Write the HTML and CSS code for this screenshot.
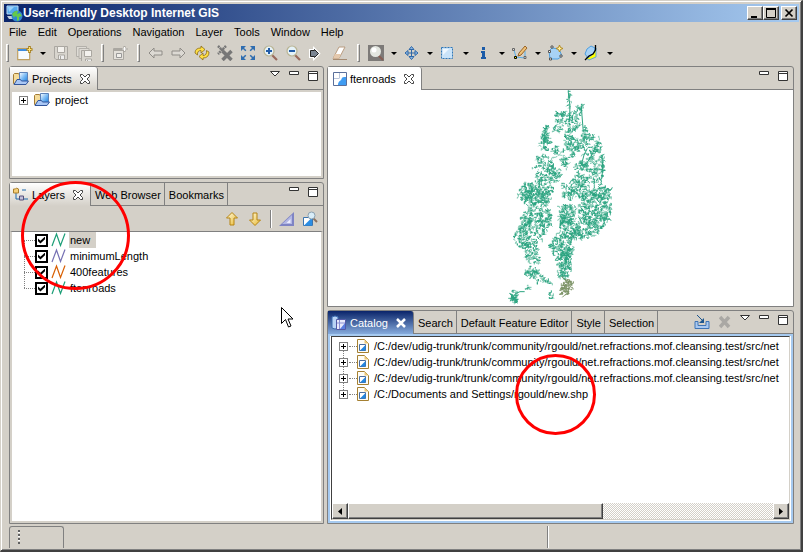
FILE: index.html
```
<!DOCTYPE html>
<html lang="en">
<head>
<meta charset="utf-8">
<title>User-friendly Desktop Internet GIS</title>
<link rel="stylesheet" href="styles.css">
</head>
<body>
<svg class="defs" aria-hidden="true">
  <defs>
    <linearGradient id="gold" x1="0" y1="0" x2="1" y2="1"><stop offset="0" stop-color="#fffbe0"/><stop offset="1" stop-color="#e8b830"/></linearGradient>
    <linearGradient id="blue" x1="0" y1="0" x2="1" y2="1"><stop offset="0" stop-color="#fff"/><stop offset=".5" stop-color="#7fbdf5"/><stop offset="1" stop-color="#1b80e0"/></linearGradient>
    <symbol id="i-folder" viewBox="0 0 16 16">
      <path d="M.5 12.500V3.500l1-1h4l1 1.500h2v8.500z" fill="#f5dc9a" stroke="#a37b35"/>
      <path d="M6.500 1.500h8v9h-8z" fill="url(#blue)" stroke="#5d82b8"/>
      <path d="M1 13.500 4 8.500h3.500l1 1.500H15.500l-2.500 3.500z" fill="#a9c7f5" stroke="#31559b"/>
    </symbol>
    <symbol id="i-map" viewBox="0 0 14 14">
      <path d="M.5.500h13v13H.5z" fill="#fff" stroke="#5a6f9b"/>
      <path d="M5 13C5 9 8 9 8.500 7c.5-2 2-2 4.500-2v8z" fill="#3f9cf2"/>
      <path d="M6.500 1v5M1 6.500h5.500" stroke="#b9c5da"/>
    </symbol>
    <symbol id="i-close" viewBox="0 0 12 12"><path d="M1.500 1.500h2L6 4l2.500-2.500h2v2L8 6l2.500 2.500v2h-2L6 8l-2.500 2.500h-2v-2L4 6 1.500 3.500z" fill="#fff" stroke="#444"/></symbol>
    <symbol id="i-menu" viewBox="0 0 10 6"><path d="M.5.500h9L5 5z" fill="#fff" stroke="#333"/></symbol>
    <symbol id="i-min" viewBox="0 0 10 4"><path d="M.5.500h9v3h-9z" fill="#fff" stroke="#333"/></symbol>
    <symbol id="i-max" viewBox="0 0 10 10"><path d="M.5.500h9v9h-9zM0 2.500h10" fill="#fff" stroke="#333"/></symbol>
    <symbol id="i-lines" viewBox="0 0 15 16"><path d="M1 14 5.500 2l4 11.500 4.500-12" fill="none" stroke="currentColor" stroke-width="1.200"/></symbol>
    <symbol id="i-doc" viewBox="0 0 12 14">
      <path d="M.5.500h7l4 4v9H.5z" fill="#fffdf5" stroke="#a58032"/>
      <path d="M7.500.500v4h4z" fill="#ecc878"/>
      <path d="M2.500 5.500h6v6h-6z" fill="#fff" stroke="#4b6d9e"/><path d="M3 11.500 8.500 6v5.500z" fill="#2386df"/>
    </symbol>
    <symbol id="i-lens" viewBox="0 0 16 16"><path d="m9 10 5 5" stroke="#9a6a5c" stroke-width="2.200"/><circle cx="6" cy="6" r="5" fill="#e5f2f8" stroke="#b9b493" stroke-width="1.200"/></symbol>
    <symbol id="i-disk" viewBox="0 0 16 16"><path d="M1.500 1.500h13v13H3l-1.500-1.500z" fill="#d8d5ce" stroke="#aaa7a1"/><path d="M4.500 1.500h7v6h-7z" fill="#f4f2ee" stroke="#aaa7a1"/><path d="M5.500 14v-4h6v4M7.500 11v3" fill="#eee" stroke="#aaa7a1"/></symbol>
  </defs>
</svg>

<div class="window">
  <header class="titlebar">
    <svg class="appicon" viewBox="0 0 17 17">
      <path d="M1 1h11v8H1z" fill="#55a9ec" stroke="#b9dcf8"/><path d="M2 2h6L3 7z" fill="#9ad2fb"/><path d="M1 11h8l1 3H3z" fill="#c5d0dc"/>
      <circle cx="11" cy="11" r="5.500" fill="#3185cf"/><path d="M6 9q3-4 6-3l-1 3 3-1 2 3-3 1v3l-2 1v-4l-2-1-1 2z" fill="#65c94b"/>
    </svg>
    <h1>User-friendly Desktop Internet GIS</h1>
    <div class="winbuttons">
      <button aria-label="Minimize window"><svg viewBox="0 0 10 10"><path d="M1 8h6v2H1z"/></svg></button>
      <button aria-label="Maximize window"><svg viewBox="0 0 10 10"><path d="M.5 1h9v8.500h-9z" fill="none" stroke="#000"/><path d="M0 0h10v2H0z"/></svg></button>
      <button class="closewin" aria-label="Close window"><svg viewBox="0 0 10 10"><path d="m1.500 1.500 7 7m0-7-7 7" stroke="#000" stroke-width="1.700"/></svg></button>
    </div>
  </header>

  <nav class="menubar">
    <button>File</button><button>Edit</button><button>Operations</button><button>Navigation</button><button>Layer</button><button>Tools</button><button>Window</button><button>Help</button>
  </nav>

  <div class="toolbar">
    <i class="grip"></i>
    <button class="tool" aria-label="New"><svg viewBox="0 0 16 16"><path d="M.7 3.700h12v11H.7z" fill="#f7fbff" stroke="#c0a060" stroke-width="1.200"/><path d="M1 4h9v2H1z" fill="#3c8ce0"/><path d="M12.500 1v7M9.500 4.500h6" stroke="#a57c12" stroke-width="2.500"/><path d="M12.500 2v5M10.500 4.500h4" stroke="#ffe37a"/></svg></button>
    <button class="drop" aria-label="New options"></button>
    <button class="tool" aria-label="Save"><svg><use href="#i-disk"/></svg></button>
    <button class="tool" aria-label="Save all"><svg viewBox="0 0 16 16"><path d="M.5 1.500h10v10H.5z" fill="#dedbd5" stroke="#b3b0aa"/><path d="M3 3.500h10v10H3z" fill="#dedbd5" stroke="#b3b0aa"/><svg x="4" y="4" width="12" height="12"><use href="#i-disk"/></svg></svg></button>
    <i class="grip"></i>
    <button class="tool" aria-label="New map"><svg viewBox="0 0 16 16"><path d="M1.500 3.500h10v11h-10z" fill="#e4e1db" stroke="#aaa7a1"/><path d="M2 4h9v2H2z" fill="#aaa7a1"/><path d="M4.500 8.500h5v4h-5z" fill="#f1efeb" stroke="#999"/><path d="M12.500 1v6M9.500 4h6" stroke="#a9a6a0" stroke-width="2"/><path d="M12.500 2v4M10.500 4h4" stroke="#fff"/></svg></button>
    <i class="grip"></i>
    <button class="tool" aria-label="Back"><svg viewBox="0 0 16 16"><path d="m1 8 5-5v3h8v4H6v3z" fill="#dcd9d3" stroke="#8f8c87"/></svg></button>
    <button class="tool" aria-label="Forward"><svg viewBox="0 0 16 16"><path d="m14 8-5-5v3H1v4h8v3z" fill="#dcd9d3" stroke="#8f8c87"/></svg></button>
    <button class="tool" aria-label="Refresh"><svg viewBox="0 0 16 16"><path d="M1 8q0-5 6-5V1l4 3.500L7 8V5.500Q3 5.500 3.500 10z" fill="#ffdf43" stroke="#8a6c18" stroke-width=".8"/><path d="M15 7q0 6-6 6v2l-4-3.500L9 8v2.500q4 0 3.500-5z" fill="#ffdf43" stroke="#8a6c18" stroke-width=".8"/></svg></button>
    <button class="tool" aria-label="Stop all"><svg viewBox="0 0 16 16"><path d="m1 1 8 8m0-8-8 8" stroke="#777" stroke-width="2.500" stroke-dasharray="2 .5"/><path d="m5.500 6 9 9m0-9-9 9" stroke="#777" stroke-width="3.500"/></svg></button>
    <button class="tool" aria-label="Zoom to extent"><svg viewBox="0 0 16 16"><path d="M1 1h5L1 6zM15 1v5l-5-5zM1 15v-5l5 5zM15 15h-5l5-5z" fill="#2f6db0"/><path d="m3 3 10 10m0-10L3 13" stroke="#2f6db0" stroke-width="1.500" stroke-dasharray="4 6.200 4"/></svg></button>
    <button class="tool" aria-label="Zoom in"><svg viewBox="0 0 16 16"><use href="#i-lens"/><path d="M6 3v6M3 6h6" stroke="#225ca8" stroke-width="2"/></svg></button>
    <button class="tool" aria-label="Zoom out"><svg viewBox="0 0 16 16"><use href="#i-lens"/><path d="M3 6h6" stroke="#225ca8" stroke-width="2"/></svg></button>
    <button class="tool" aria-label="Go"><svg viewBox="0 0 16 16"><path d="M1.500 5.500h4v-1l4 4-4 4v-1h-4z" fill="#7a8592" stroke="#fff" stroke-width="3"/><path d="M1.500 5.500h4v-1l4 4-4 4v-1h-4z" fill="#7a8592" stroke="#222"/></svg></button>
    <button class="tool" aria-label="Clear selection"><svg viewBox="0 0 16 16"><path d="M1 14.500h14" stroke="#a58b72"/><path d="M7 2h6L7 13.500H1z" fill="#fff" stroke="#b99c80"/><path d="m3 9-2 4.500h6L9 9z" fill="#e5c9ad"/></svg></button>
    <i class="grip"></i>
    <button class="tool" aria-label="Zoom tool"><svg viewBox="0 0 16 16"><path d="M0 0h16v16H0z" fill="#7d7a78"/><path d="m10 10 5 5" stroke="#865d53" stroke-width="2"/><circle cx="7.500" cy="6.500" r="5.500" fill="#e3e6e0"/><circle cx="6" cy="5" r="2.500" fill="#fff"/></svg></button>
    <button class="drop" aria-label="Zoom tools"></button>
    <button class="tool" aria-label="Pan tool"><svg viewBox="0 0 16 16"><path d="M7.500 2v12M1.500 8h12" stroke="#2f68a8"/><path d="m7.500 1.500 2.500 3H5zM7.500 14.500l2.500-3H5zM1 8l3-2.500v5zM14 8l-3-2.500v5z" fill="#8eb9e5" stroke="#2f68a8"/></svg></button>
    <button class="drop" aria-label="Pan tools"></button>
    <button class="tool" aria-label="Select tool"><svg viewBox="0 0 16 16"><path d="M1.500 2.500h11v11h-11z" fill="#c9e3f9" stroke="#2f77b8" stroke-dasharray="2 1"/><path d="M3 4h6l-6 6z" fill="#eef7ff"/></svg></button>
    <button class="drop" aria-label="Select tools"></button>
    <button class="tool" aria-label="Info tool"><svg viewBox="0 0 16 16"><path d="M6 2h3v3H6zM5 6h4v6h1v2H5v-2h1V8H5z" fill="#1b5ba8"/></svg></button>
    <button class="drop" aria-label="Info tools"></button>
    <button class="tool" aria-label="Edit geometry"><svg viewBox="0 0 16 16"><path d="m2 5 2 7 9 1V6" fill="none" stroke="#58aee8"/><path d="m6 11 1-3 6-7 2 2-6 7z" fill="#eec178" stroke="#9a6427"/><path d="M.5 3.500h2v2h-2zM12 11.500h2v2h-2z" fill="#ddd" stroke="#666"/><path d="M2.500 11.500h2v2h-2z" fill="#ff0" stroke="#000"/></svg></button>
    <button class="drop" aria-label="Edit tools"></button>
    <button class="tool" aria-label="Create feature"><svg viewBox="0 0 16 16"><path d="m4 3 7 1 3 7-4 3H2L1 6z" fill="#a8d2f5" stroke="#4d9fe0"/><path d="M3 1h2v2H3zM.5 5.500h2v2h-2zM12 10h2v2h-2zM1.500 13h2v2h-2z" fill="#fff" stroke="#555"/><path d="m11.500 0 1 2.500L15 3.500l-2.500 1-1 2.500-1-2.500-2.500-1 2.500-1z" fill="#fff0a0" stroke="#b38a20"/></svg></button>
    <button class="drop" aria-label="Create tools"></button>
    <button class="tool" aria-label="Split feature"><svg viewBox="0 0 16 16"><path d="M12 3v9l-7 3-3-2 5-3 4-5z" fill="#ff0" stroke="#67a8cf"/><path d="m3 4 4-3 4 2-1 5-6 5-3-4z" fill="#a8d2f5" stroke="#4d9fe0"/><path d="M11.500 0v5L9 9l-4 2-4 4" fill="none" stroke="#000" stroke-width="1.300"/></svg></button>
    <button class="drop" aria-label="Split tools"></button>
  </div>

  <main class="workbench">
    <div class="column left">
      <section class="view">
        <div class="tabs">
          <button class="tab current"><svg class="i16"><use href="#i-folder"/></svg>Projects<svg class="x"><use href="#i-close"/></svg></button>
          <div class="viewtools"><svg class="vmenu"><use href="#i-menu"/></svg><svg class="vmin"><use href="#i-min"/></svg><svg class="vmax"><use href="#i-max"/></svg></div>
        </div>
        <div class="content inset">
          <ul class="tree projects"><li><button class="expander" aria-label="Expand project"></button><svg class="i16"><use href="#i-folder"/></svg><span>project</span></li></ul>
        </div>
      </section>

      <section class="view layers">
        <div class="tabs">
          <button class="tab current"><svg class="i16" viewBox="0 0 16 16"><path d="M3 6v6h4M9 3h4M11 12h4" fill="none" stroke="#1b68ad"/><path d="M.5 2h2l1-1 2 1v4h-5z" fill="#f5cf78" stroke="#aa7f2c"/><path d="M6.500 9h4v4h-4z" fill="#c3bfd8" stroke="#55507c"/></svg>Layers<svg class="x"><use href="#i-close"/></svg></button>
          <button class="tab">Web Browser</button><button class="tab">Bookmarks</button>
          <div class="viewtools"><svg class="vmin"><use href="#i-min"/></svg><svg class="vmax"><use href="#i-max"/></svg></div>
        </div>
        <div class="viewbar">
          <button aria-label="Move up"><svg viewBox="0 0 16 16"><path d="m8 1.500 5.500 5.500H10v7H6V7H2.500z" fill="url(#gold)" stroke="#b68412"/></svg></button>
          <button aria-label="Move down"><svg viewBox="0 0 16 16"><path d="m8 14.500 5.500-5.500H10V2H6v7H2.500z" fill="url(#gold)" stroke="#b68412"/></svg></button>
          <i class="divider"></i>
          <button aria-label="Simplify"><svg viewBox="0 0 16 16"><path d="M15 1v14H0z" fill="#7f84c4"/><path d="M13 4v9H3z" fill="#b3b8e4"/><path d="M11.500 8v4h-4z" fill="#eef"/></svg></button>
          <button aria-label="Zoom to layer"><svg viewBox="0 0 16 16"><path d="M1.500 6.500h9v8h-9z" fill="#fff" stroke="#3a74af"/><path d="m2 14.500 8-8v8z" fill="#2c8ee4"/><path d="m11 7 4 4" stroke="#8c7260" stroke-width="2"/><circle cx="9.500" cy="4.500" r="3.500" fill="#d9edf8" stroke="#8ba0b0"/></svg></button>
        </div>
        <div class="content inset">
          <ul class="tree layerlist">
            <li class="selected"><i class="branch"></i><input type="checkbox" id="l1" checked><svg class="line teal"><use href="#i-lines"/></svg><label for="l1">new</label></li>
            <li><i class="branch"></i><input type="checkbox" id="l2" checked><svg class="line violet"><use href="#i-lines"/></svg><label for="l2">minimumLength</label></li>
            <li><i class="branch"></i><input type="checkbox" id="l3" checked><svg class="line orange"><use href="#i-lines"/></svg><label for="l3">400features</label></li>
            <li><i class="branch"></i><input type="checkbox" id="l4" checked><svg class="line teal"><use href="#i-lines"/></svg><label for="l4">ftenroads</label></li>
          </ul>
        </div>
        <svg class="ring ring-layers" viewBox="0 0 109 109"><circle cx="54.500" cy="54.500" r="53"/></svg>
        <svg class="cursor" viewBox="0 0 12 21"><path d="M.5.500v16l4-4 3 7.500 2.500-1-3-7h5z" fill="#fff" stroke="#000"/></svg>
      </section>
    </div>

    <div class="column right">
      <section class="view editor">
        <div class="tabs">
          <button class="tab current"><svg class="i14"><use href="#i-map"/></svg>ftenroads<svg class="x"><use href="#i-close"/></svg></button>
          <div class="viewtools"><svg class="vmin"><use href="#i-min"/></svg><svg class="vmax"><use href="#i-max"/></svg></div>
        </div>
        <div class="content"><svg class="roads" id="roads" viewBox="-12 15 390 645" role="img" aria-label="Road network"></svg></div>
      </section>

      <section class="view catalog">
        <div class="tabs">
          <button class="tab current"><svg class="i16" viewBox="0 0 16 16"><path d="M1 2q3-2 6 0v11q-3 2-6 0z" fill="#b9d3f5" stroke="#3d6cb0"/><path d="M5.500 4.500h9v10h-9z" fill="#e8e9fb" stroke="#5259a5"/><path d="M6 8h8M8.500 5v9" stroke="#8b91d5"/><path d="m9 14 5-6v6z" fill="#5b7de0"/></svg>Catalog<svg class="x" viewBox="0 0 12 12"><path d="m2 2 8 8m0-8-8 8" stroke="#fff" stroke-width="2.500"/></svg></button>
          <button class="tab">Search</button><button class="tab">Default Feature Editor</button><button class="tab">Style</button><button class="tab">Selection</button>
          <div class="viewtools">
            <svg class="i16" viewBox="0 0 16 16"><path d="M1 6.500h3v4h8v-4h3v7H1z" fill="#a9c8f0" stroke="#3f74b5"/><path d="m3 0 6 6" stroke="#1d568f"/><path d="M10 3v5H5z" fill="#1d568f"/></svg>
            <svg class="i12" viewBox="0 0 12 16"><path d="m1 2 9 10m0-10-9 10" stroke="#aaa8a4" stroke-width="3.500"/></svg>
            <svg class="vmenu"><use href="#i-menu"/></svg><svg class="vmin"><use href="#i-min"/></svg><svg class="vmax"><use href="#i-max"/></svg>
          </div>
        </div>
        <div class="content">
          <div class="listbox">
            <ul class="tree entries">
              <li><button class="expander" aria-label="Expand"></button><i class="branch"></i><svg class="doc"><use href="#i-doc"/></svg><span>/C:/dev/udig-trunk/trunk/community/rgould/net.refractions.mof.cleansing.test/src/net</span></li>
              <li><button class="expander" aria-label="Expand"></button><i class="branch"></i><svg class="doc"><use href="#i-doc"/></svg><span>/C:/dev/udig-trunk/trunk/community/rgould/net.refractions.mof.cleansing.test/src/net</span></li>
              <li><button class="expander" aria-label="Expand"></button><i class="branch"></i><svg class="doc"><use href="#i-doc"/></svg><span>/C:/dev/udig-trunk/trunk/community/rgould/net.refractions.mof.cleansing.test/src/net</span></li>
              <li><button class="expander" aria-label="Expand"></button><i class="branch"></i><svg class="doc"><use href="#i-doc"/></svg><span>/C:/Documents and Settings/rgould/new.shp</span></li>
            </ul>
            <div class="scrollbar">
              <button aria-label="Scroll left"><svg viewBox="0 0 4 7"><path d="M4 0v7L0 3.500z"/></svg></button>
              <div class="track"><div class="thumb"></div></div>
              <button aria-label="Scroll right"><svg viewBox="0 0 4 7"><path d="M0 0v7l4-3.500z"/></svg></button>
            </div>
          </div>
        </div>
        <svg class="ring ring-catalog" viewBox="0 0 81 81"><circle cx="40.500" cy="40.500" r="39"/></svg>
      </section>
    </div>
  </main>

  <footer class="status"><div class="fastview"><i></i></div><div class="statusline"></div></footer>
</div>
<script src="roads.js"></script>
</body>
</html>
```
FILE: roads.js
```
// Draws the road network as short right-angled segments scattered round cluster centres.
let seed = 20;
function rnd() {
  seed = (seed + 0x6d2b79f5) | 0;
  let t = Math.imul(seed ^ (seed >>> 15), 1 | seed);
  t = (t + Math.imul(t ^ (t >>> 7), 61 | t)) ^ t;
  return ((t ^ (t >>> 14)) >>> 0) / 4294967296;
}
// x, y, x radius, y radius, number of roads
const clusters = [
  [208,45,6,25,8],[240,70,8,12,10],[185,102,20,18,26],[220,110,13,30,28],[250,145,7,18,12],[270,158,14,6,8],
  [138,128,8,10,8],[133,168,11,28,34],[170,130,16,10,8],[205,165,12,30,24],[235,175,24,15,26],[290,185,13,18,18],
  [190,230,10,17,14],[175,197,18,14,12],[218,195,18,15,14],[130,248,27,36,48],[163,265,20,22,30],[240,240,17,13,18],
  [240,285,20,17,30],[270,228,18,30,24],[305,240,5,32,14],[290,268,18,30,22],[210,322,20,18,28],[243,308,20,20,18],
  [80,308,16,16,16],[75,328,22,12,24],[125,310,32,24,60],[110,350,34,22,54],[302,325,28,18,50],[265,335,22,15,26],
  [310,370,20,32,54],[260,378,27,30,50],[200,385,22,26,54],[95,400,26,24,54],[135,400,18,26,40],[65,455,20,26,44],
  [78,428,16,20,20],[115,435,22,16,18],[205,430,25,30,54],[260,430,30,24,48],[230,452,16,12,16],[290,410,25,24,32],
  [165,480,14,24,28],[198,485,18,32,54],[185,520,13,35,34],[205,530,8,40,28],[185,570,12,12,14],[90,500,15,26,30],
  [108,520,7,20,10],[95,560,18,12,26],[125,582,20,8,10],[150,590,5,4,2],[85,607,7,5,4],[40,634,9,17,22],
  [150,625,8,4,3],[158,638,3,3,2],[110,470,16,12,6],[185,300,4,6,2]
];
const burnt = [[198,605,14,22,60]];
const trunks = "M205 22l2 20 3 20-2 50M244 62l2 30 4 50M305 210l3 30-2 40M38 640l8-14 14-6h14M262 190l-10 20-8 30M290 180l-20 40-20 30M135 140l-4 50";

function walk(c) {
  const a = rnd() * Math.PI * 2, r = Math.sqrt(rnd()) * 1.15;
  const x = Math.round((c[0] + Math.cos(a) * r * c[2]) / 3) * 3;
  const y = Math.round((c[1] + Math.sin(a) * r * c[3]) / 3) * 3;
  let d = "M" + (x + 1) + " " + (y + 1);
  const steps = 2 + Math.floor(rnd() * 3);
  for (let i = 0; i < steps; i++) {
    const dx = Math.round(rnd() * 4 - 2) * 3, dy = Math.round(rnd() * 4 - 2) * 3;
    d += rnd() < 0.7 ? (rnd() < 0.5 ? "h" + dx : "v" + dy) : "l" + dx + " " + dy;
  }
  return d;
}
function add(d, cls) {
  const p = document.createElementNS("http://www.w3.org/2000/svg", "path");
  p.setAttribute("d", d);
  p.setAttribute("class", cls);
  document.getElementById("roads").appendChild(p);
}
function spread(list, share) {
  let d = "";
  for (const c of list) for (let i = 0; i < c[4] * share; i++) d += walk(c);
  return d;
}
add(spread(clusters, 1.1), "road-soft");
add(spread(clusters, 0.9) + trunks, "road");
add(spread(burnt, 1.2), "road-burnt");
```
FILE: styles.css
```
* { box-sizing: border-box; }
body {
  margin: 0;
  background: #d4d0c8;
  color: #000;
  font: 11px/16px "Liberation Sans", Arial, sans-serif;
}
button {
  margin: 0; padding: 0; border: 0; background: none;
  color: inherit; font: inherit; white-space: nowrap;
}
ul { list-style: none; margin: 0; padding: 0; }
svg { display: block; flex: none; }
.defs { position: absolute; width: 0; height: 0; }

.window {
  display: flex; flex-direction: column;
  height: 100vh; overflow: hidden;
  padding: 2px 2px 0;
  border: 1px solid #d4d0c8;
  border-right: 2px solid #404040; border-bottom: 2px solid #404040;
  box-shadow: inset 1px 1px #fff, inset -1px -1px #808080;
}

.titlebar {
  display: flex; align-items: center; flex: none;
  height: 18px; margin: 1px 0 0 1px; padding: 0 2px;
  background: linear-gradient(90deg, #0a246a, #a6caf0);
  color: #fff;
}
.appicon { width: 17px; height: 17px; }
.titlebar h1 { flex: 1; margin: 0; font-size: 12px; line-height: 16px; font-weight: bold; }
.winbuttons { display: flex; }
.winbuttons button, .scrollbar button, .thumb {
  background: #d4d0c8;
  border: 1px solid; border-color: #fff #404040 #404040 #fff;
  box-shadow: inset -1px -1px #808080;
}
.winbuttons button { display: grid; place-items: center; width: 16px; height: 14px; }
.winbuttons svg { width: 10px; height: 10px; }
.winbuttons .closewin { margin-left: 2px; }

.menubar { display: flex; flex: none; height: 20px; padding: 0 0 0 6px; gap: 11px; align-items: center; }

.toolbar { display: flex; flex: none; align-items: center; height: 22px; padding-left: 3px; }
.grip { flex: none; width: 3px; height: 18px; margin: 0 5px; border: 1px solid; border-color: #fff #808080 #808080 #fff; }
.grip:first-child { margin-left: 0; }
.tool { width: 23px; padding-left: 3px; }
.tool svg { width: 16px; height: 16px; }
.drop { display: flex; align-items: center; width: 13px; height: 16px; padding-left: 3px; }
.drop::before { content: ""; border: 3px solid transparent; border-top-color: #000; border-bottom: 0; }

.workbench { flex: 1; min-height: 0; display: grid; grid-template-columns: 315fr 467fr; gap: 3px; padding: 2px 5px 0 6px; }
.column { display: grid; gap: 3px; min-width: 0; min-height: 0; }
.left { grid-template-rows: 113fr 342fr; }
.right { grid-template-rows: 241fr 214fr; }

.view {
  position: relative; display: flex; flex-direction: column;
  min-width: 0; min-height: 0;
  border: 1px solid #808080; border-radius: 3px 3px 0 0;
}
.tabs { display: flex; flex: none; height: 23px; border-bottom: 1px solid #808080; }
.tab { display: flex; align-items: center; height: 22px; padding: 1px 3px 0 4px; border-right: 1px solid #808080; }
.tab.current { height: 23px; padding: 0 6px 0 3px; gap: 3px; border-radius: 0 3px 0 0; background: linear-gradient(#fff, #d4d0c8); }
.x { width: 12px; height: 12px; margin-left: 4px; }
.i16 { width: 16px; height: 16px; }
.i14 { width: 14px; height: 14px; }
.i12 { width: 12px; height: 16px; }
.viewtools { display: flex; align-items: flex-start; gap: 9px; margin-left: auto; padding: 4px 5px 0 0; }
.vmenu { width: 10px; height: 6px; }
.vmin { width: 10px; height: 4px; }
.vmax { width: 10px; height: 10px; }
.content { flex: 1; min-height: 0; background: #fff; }
.inset { border: 2px solid #d4d0c8; }
.editor .tab.current { background: #fff; padding-left: 5px; }

.viewbar { display: flex; flex: none; justify-content: flex-end; align-items: center; height: 25px; gap: 7px; padding-right: 5px; }
.viewbar svg { width: 16px; height: 16px; }
.divider { width: 2px; height: 18px; border-left: 1px solid #808080; border-right: 1px solid #fff; }
.layers .inset { border-top: 1px solid #808080; }

.tree li { display: flex; align-items: center; height: 16px; white-space: nowrap; }
.projects li { padding-left: 7px; gap: 6px; }
.projects span { margin-left: -1px; }
.expander {
  flex: none; width: 9px; height: 9px; border: 1px solid #808080;
  background: linear-gradient(#000, #000) center / 5px 1px no-repeat, linear-gradient(#000, #000) center / 1px 5px no-repeat, #fff;
}
.branch { flex: none; border-top: 1px dotted #808080; }
.layerlist { padding-left: 12px; }
.layerlist li { position: relative; }
.layerlist .branch { width: 11px; }
.layerlist li + li::before {
  content: ""; position: absolute; left: 0; top: -8px; height: 16px; border-left: 1px dotted #808080;
}
.layerlist input {
  appearance: none; flex: none; width: 13px; height: 13px; margin: 0;
  border: 2px solid #000; background: #fff;
}
.layerlist input:checked::before {
  content: ""; display: block; width: 7px; height: 7px; margin: 1px;
  background: #000; clip-path: polygon(0 30%, 35% 62%, 100% 0, 100% 38%, 35% 100%, 0 68%);
}
.line { width: 15px; height: 16px; margin: 0 3px; }
.layerlist label { padding: 0 6px 0 1px; }
.selected label { background: #d4d0c8; }
.teal { color: #1b9e77; }
.violet { color: #7570b3; }
.orange { color: #d95f02; }

.roads { width: 130px; height: 215px; max-height: 100%; margin: 0 auto; }
.roads path { fill: none; stroke-width: 3; }
.road { stroke: #2ba480; }
.road-soft { stroke: #7cc7b0; }
.road-burnt { stroke: #7d9467; }

.catalog .tab.current { color: #fff; background: linear-gradient(#0a246a, #86abdc); }
.catalog .content { border: 2px solid #a6caf0; padding: 0 1px 1px; }
.listbox {
  display: flex; flex-direction: column; height: 100%; overflow: hidden;
  border: 1px solid; border-color: #404040 #d4d0c8 #d4d0c8 #404040;
}
.entries { flex: 1; min-height: 0; overflow: hidden; padding: 1px 0 0 7px; }
.entries li { position: relative; }
.entries .branch { width: 8px; margin-left: 1px; }
.entries li + li::before {
  content: ""; position: absolute; left: 4px; top: -4px; height: 8px; border-left: 1px dotted #808080;
}
.doc { width: 12px; height: 14px; margin-right: 5px; }
.scrollbar { display: flex; flex: none; height: 16px; }
.scrollbar button { display: grid; place-items: center; flex: none; width: 16px; }
.scrollbar svg { width: 4px; height: 7px; }
.track { flex: 1; background: repeating-conic-gradient(#fff 0 25%, #d4d0c8 0 50%) 0 0 / 2px 2px; }
.thumb { width: 60%; height: 100%; }

.ring { position: absolute; overflow: visible; pointer-events: none; }
.ring circle { fill: none; stroke: #f00; stroke-width: 3; }
.ring-layers { left: 11px; top: -2px; width: 109px; height: 109px; }
.ring-catalog { left: 187px; top: 43px; width: 81px; height: 81px; }
.cursor { position: absolute; left: 271px; top: 124px; width: 12px; height: 21px; }

.status { display: flex; flex: none; height: 26px; padding: 2px 0 2px 6px; }
.fastview { width: 55px; padding: 3px 8px; border: 1px solid #808080; border-bottom: 0; border-radius: 3px 3px 0 0; }
.fastview i { display: block; width: 2px; height: 14px; background: repeating-linear-gradient(#606060 0 2px, #fff 2px 3px, #d4d0c8 3px 4px); }
.statusline { flex: 1; margin-right: 251px; border-right: 1px solid #808080; box-shadow: 1px 0 #fff; }
```
